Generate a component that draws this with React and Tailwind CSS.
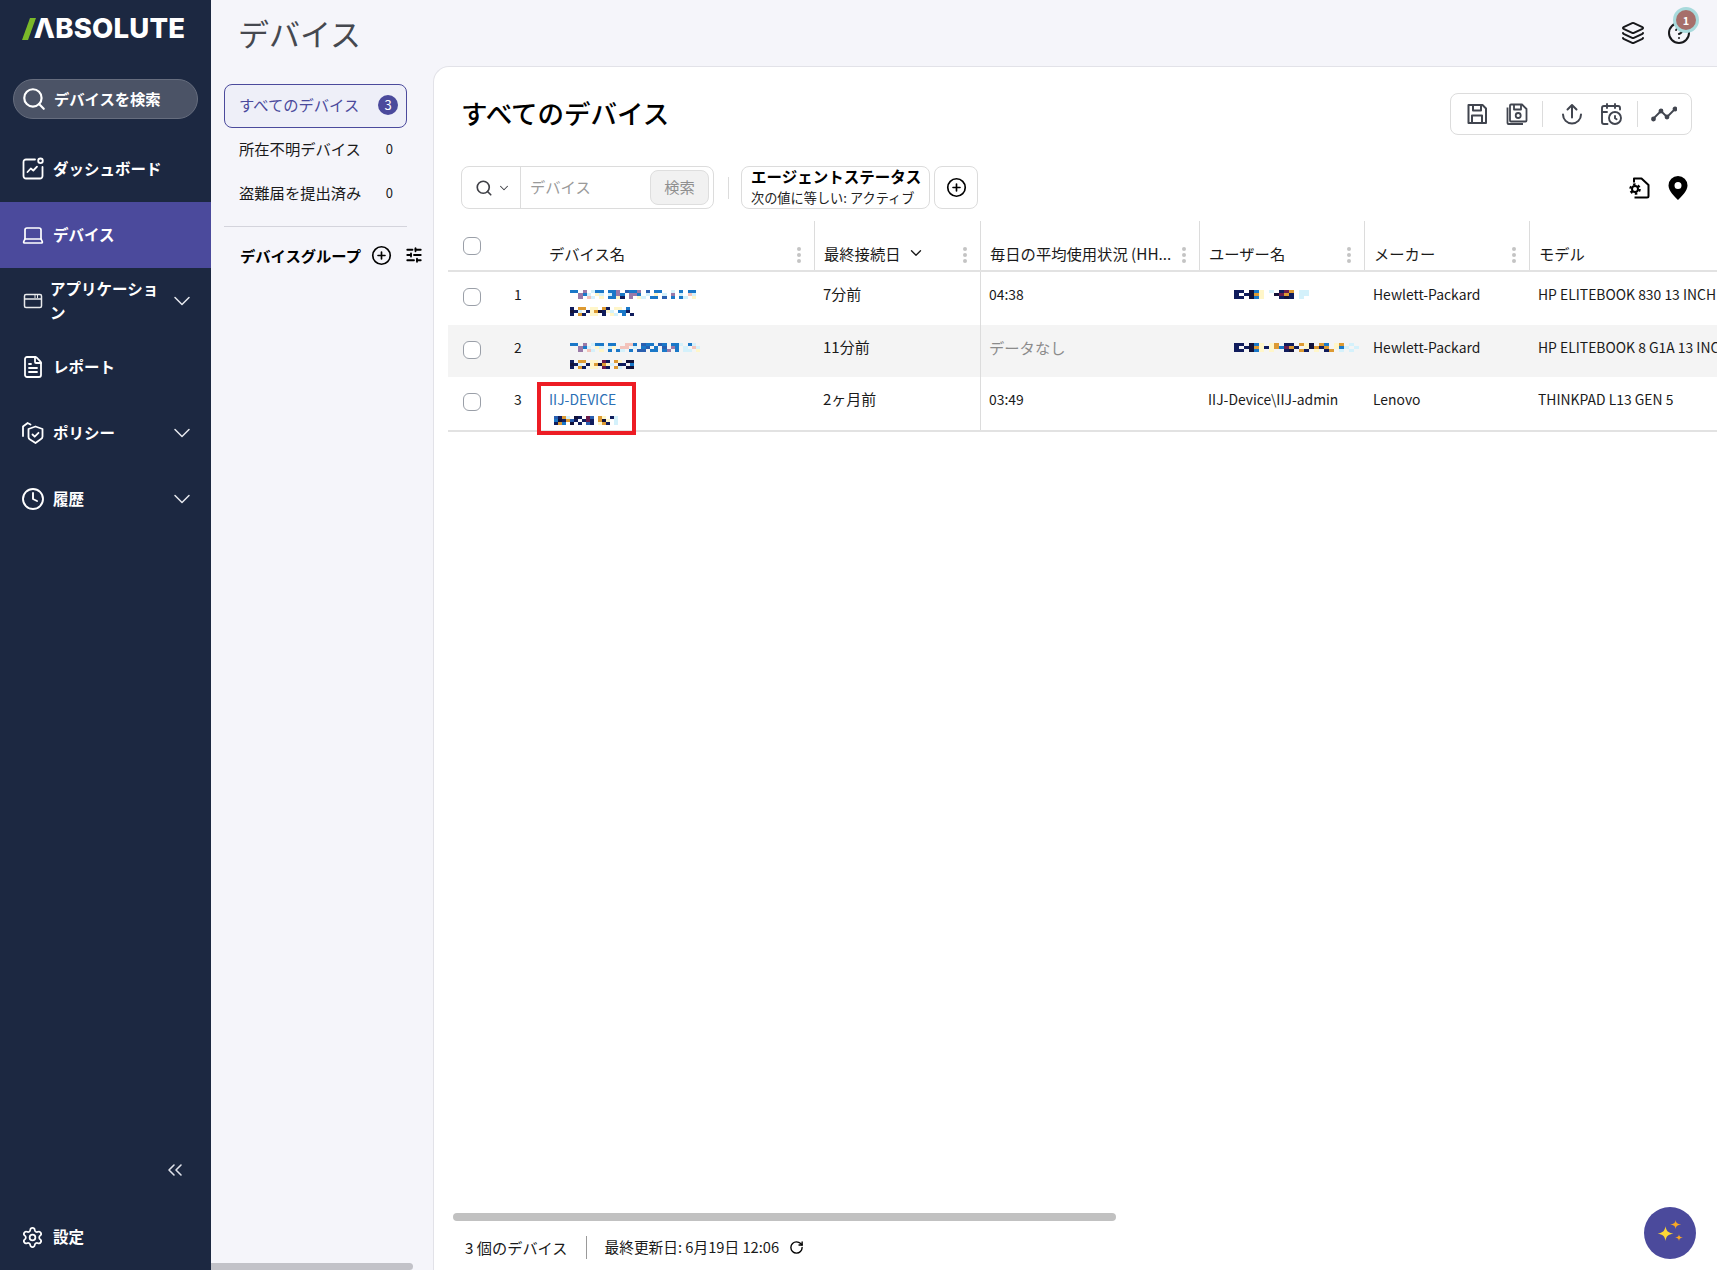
import React from 'react';
import {
  Search, ChevronDown, ChevronsLeft, Laptop, FileText, Clock, Settings, Layers, CircleHelp,
  CalendarClock, CirclePlus, SlidersHorizontal, RotateCw,
} from 'lucide-react';

const FONT = "font-['Noto_Sans_CJK_JP','Noto_Sans',sans-serif]";

const PALETTE = {
  k: '#101c5c', b: '#1a78c8', n: '#2a5fb0', l: '#d4f1fb', p: '#9a7aa8', y: '#fff6c9',
  o: '#dd9a32', r: '#f3c3bb', d: '#12123a', m: '#6b1c4c', g: '#c9c9d6',
};

// ぼかし部分 (モザイク) は文字ではなく絵として描く
const Mosaic = ({ rows, cell = 4, h = 3, className = '' }) => (
  <svg width={rows[0].length * cell} height={rows.length * h} className={`block ${className}`} shapeRendering="crispEdges">
    {rows.map((row, y) =>
      row.split('').map((c, x) =>
        PALETTE[c] ? <rect key={`${x}-${y}`} x={x * cell} y={y * h} width={cell} height={h} fill={PALETTE[c]} /> : null
      )
    )}
  </svg>
);

const NAME_1 = ['bb.p.lbb.bbp.nbbp.n.bb..l.b.bb.', '..pbl.yl.lbpb.ppb.l.y.l.p.l.rl.', '..p.rl.y.bbyk.p.yl.bb.n.b.bl.y.'];
const NAME_2 = ['bb.p.lbb.bb..rrb.nbb.nb.bbl.bl.', '..pbl.yl.ly.rr.l.bn.b.n.pb.l.rl', '..p.rl.y.b.bl.b.nn.bb.bp.b.ll.y'];
const SUB_1 = ['k.oo.yy.ok.yy.b.', 'dkl.kyodkyl.bbk.', 'k.ok.yy.k.yl.b.k'];
const SUB_2 = ['k.oo.yy.mk.oy.dd', 'dkl.kyodoyl.kk.b', 'k.ok.yy.mk.ol.dd'];
const SUB_3 = ['nkol.dk.mn.oy.kl', 'bdkonk.kmk.ody.l', 'kob.d.k.nk.yok.l'];
const USER_1 = ['kk.dby.l.kmo.ll.', 'k.kdoy..dmok.ll.', 'kk.dby...kdk.l..'];
const USER_2 = ['kk.dby.yo.kk.oyd.ob.yo.l.', 'k.kdoykyobmok.ydoko.ybl.l', 'kk.dby.y..kd.ok.y.ko.l.l.'];

const Logo = () => (
  <div className="flex items-center justify-center h-[58px] pr-[4px]" aria-label="ABSOLUTE">
    <svg width="14" height="22" viewBox="0 0 14 22" className="mr-[-2px]">
      <polygon points="8,0 14,0 6,22 0,22" fill="#7ab929" />
    </svg>
    <span className="text-white font-['Inter',sans-serif] font-extrabold text-[27.500px] leading-none tracking-[0.2px]">ΛBSOLUTE</span>
  </div>
);

const DashIcon = () => (
  <svg width="24" height="24" viewBox="0 0 24 24" fill="none" stroke="currentColor" strokeWidth="1.800" strokeLinecap="round" strokeLinejoin="round">
    <path d="M14 2.500H5a2.500 2.500 0 0 0-2.500 2.500v14A2.500 2.500 0 0 0 5 21.500h14a2.500 2.500 0 0 0 2.500-2.500V10" />
    <circle cx="19.500" cy="3.800" r="2.300" />
    <path d="M6.500 15l3.300-3.500 2.500 2 3.700-3.800" />
  </svg>
);

const AppIcon = () => (
  <svg width="20" height="20" viewBox="0 0 20 20" fill="none" stroke="currentColor" strokeWidth="1.500" strokeLinejoin="round" className="opacity-90">
    <rect x="1.500" y="3.500" width="17" height="13" rx="1.500" />
    <path d="M1.500 8h17" />
    <path d="M12 4v3M14.500 4v3" strokeWidth="1" />
  </svg>
);

const PolicyIcon = () => (
  <svg width="24" height="24" viewBox="0 0 24 24" fill="none" stroke="currentColor" strokeWidth="1.800" strokeLinecap="round" strokeLinejoin="round">
    <path d="M14.500 5.500l7 2.500v7.500c0 1-.5 2-1.500 2.600L14.500 22 9 18.600c-1-.6-1.500-1.600-1.500-2.600V8z" />
    <path d="M11.500 13.500l2.200 2.200 3.800-3.900" />
    <path d="M2 15V5.500L6 2.500M6.500 2l3 1.500" />
  </svg>
);

const NavItem = ({ icon, label, chevron, active, labelClass = 'ml-[8px] pr-[16px]' }) => (
  <div className={`flex items-center h-[66px] pl-[21px] pr-[15px] text-white ${active ? 'bg-[#4b4a9c]' : ''}`}>
    <span className="w-[24px] flex justify-center shrink-0">{icon}</span>
    <span className={`flex-1 mb-[2px] text-[15.500px] font-semibold leading-[24px] ${labelClass}`}>{label}</span>
    {chevron && <ChevronDown className="w-[28px] h-[28px] shrink-0 text-[#e4e6ec]" strokeWidth={1.300} />}
  </div>
);

const Sidebar = () => (
  <aside className="w-[211px] shrink-0 h-full bg-[#1c2841] flex flex-col">
    <Logo />
    <div className="mx-[13px] mt-[21px] h-[40px] rounded-full bg-[#4b5366] border border-[#666d7e] flex items-center pl-[7px] text-white">
      <Search className="w-[26px] h-[26px]" strokeWidth={2} />
      <span className="ml-[7px] mb-[2px] text-[15.300px] font-semibold">デバイスを検索</span>
    </div>
    <nav className="mt-[17px] flex flex-col">
      <NavItem icon={<DashIcon />} label="ダッシュボード" />
      <NavItem active icon={<Laptop className="w-[24px] h-[24px]" strokeWidth={1.700} />} label="デバイス" />
      <NavItem icon={<AppIcon />} label="アプリケーション" chevron labelClass="ml-[5px] pr-[4px]" />
      <NavItem icon={<FileText className="w-[24px] h-[24px]" strokeWidth={1.800} />} label="レポート" />
      <NavItem icon={<PolicyIcon />} label="ポリシー" chevron />
      <NavItem icon={<Clock className="w-[24px] h-[24px]" strokeWidth={1.900} />} label="履歴" chevron />
    </nav>
    <div className="mt-auto flex justify-end pr-[24px] text-[#dfe2ea]">
      <ChevronsLeft className="w-[24px] h-[24px]" strokeWidth={1.600} />
    </div>
    <div className="flex items-center h-[34px] mt-[38px] mb-[16px] pl-[21px] text-white">
      <Settings className="w-[23px] h-[23px]" strokeWidth={1.800} />
      <span className="ml-[9px] text-[15.500px] font-semibold">設定</span>
    </div>
  </aside>
);

const TopBar = () => (
  <header className="h-[66px] shrink-0 flex items-center justify-between pl-[27px] pr-[26px]">
    <h1 className="text-[31px] leading-[48px] font-normal text-[#45484f]">デバイス</h1>
    <div className="flex items-center gap-[22px] text-[#17181b]">
      <Layers className="w-[24px] h-[24px]" strokeWidth={2} />
      <div className="relative">
        <CircleHelp className="w-[24px] h-[24px]" strokeWidth={2} />
        <span className="absolute -top-[11px] -right-[5px] w-[20px] h-[20px] rounded-full bg-[#a66f6b] ring-[3px] ring-[#a8dadc] text-white text-[11px] font-bold flex items-center justify-center">1</span>
      </div>
    </div>
  </header>
);

const SubPanel = () => (
  <div className="w-[222px] shrink-0 h-full relative pl-[13px] pr-[26px] pt-[18px]">
    <div className="h-[44px] rounded-lg border border-[#4b4a9c] bg-[#eeeff8] flex items-center justify-between pl-[14px] pr-[8px] pb-[3px] text-[#4b4a9c]">
      <span className="text-[15.300px]">すべてのデバイス</span>
      <span className="w-[20px] h-[20px] rounded-full bg-[#4b4a9c] text-white text-[13px] flex items-center justify-center">3</span>
    </div>
    <div className="h-[44px] pb-[3px] flex items-center justify-between pl-[15px] pr-[14px] text-[15.300px] text-[#1a1a1a]">
      <span>所在不明デバイス</span><span className="text-[13px]">0</span>
    </div>
    <div className="h-[44px] pb-[3px] flex items-center justify-between pl-[15px] pr-[14px] text-[15.300px] text-[#1a1a1a]">
      <span>盗難届を提出済み</span><span className="text-[13px]">0</span>
    </div>
    <div className="mt-[10px] border-t border-[#d4d4dc]" />
    <div className="mt-[17px] flex items-center pl-[16px] text-black -mr-[14px]">
      <span className="text-[15.300px] font-semibold whitespace-nowrap">デバイスグループ</span>
      <CirclePlus className="ml-[10px] w-[21px] h-[21px] shrink-0" strokeWidth={1.900} />
      <SlidersHorizontal className="ml-[13px] w-[18px] h-[18px] shrink-0" strokeWidth={2.400} />
    </div>
    <div className="absolute left-0 bottom-0 w-[202px] h-[7px] rounded-r-sm bg-[#c2c2c8]" />
  </div>
);

const UploadIcon = () => (
  <svg width="24" height="24" viewBox="0 0 24 24" fill="none" stroke="#41454f" strokeWidth="2" strokeLinecap="round" strokeLinejoin="round">
    <path d="M12 15.500V3M7.500 7.500L12 3l4.500 4.500" />
    <path d="M3 12.500a9 9 0 0 0 18 0" />
  </svg>
);

const SaveStackIcon = () => (
  <svg width="24" height="24" viewBox="0 0 24 24" fill="none" stroke="#41454f" strokeWidth="1.800" strokeLinejoin="round">
    <path d="M6 2.500h11l4.500 4.500v11.500a1 1 0 0 1-1 1H6a1 1 0 0 1-1-1v-15a1 1 0 0 1 1-1z" />
    <path d="M2.500 5.500V21a1 1 0 0 0 1 1H18" />
    <path d="M9 3v4.500h7V3" />
    <circle cx="13.200" cy="13.500" r="2.500" />
  </svg>
);

const SaveIcon = () => (
  <svg width="24" height="24" viewBox="0 0 24 24" fill="none" stroke="#41454f" strokeWidth="2" strokeLinejoin="round">
    <path d="M3.500 3h14l3.500 3.500v14.500h-17.500z" />
    <path d="M8 3v5.500h8V3" />
    <path d="M7 21v-7.500h10V21" />
  </svg>
);

const TrendIcon = () => (
  <svg width="26" height="24" viewBox="0 0 26 24" fill="none" stroke="#41454f" strokeWidth="1.800" strokeLinecap="round" strokeLinejoin="round">
    <path d="M2 17l8-8 6 6 8-8" />
    <circle cx="2.500" cy="17" r="1.500" fill="#41454f" />
    <circle cx="10" cy="9" r="1.500" fill="#41454f" />
    <circle cx="16" cy="15" r="1.500" fill="#41454f" />
    <circle cx="24" cy="7" r="1.500" fill="#41454f" />
  </svg>
);

const GearDocIcon = () => (
  <svg width="24" height="24" viewBox="0 0 24 24" fill="none" stroke="#000" strokeWidth="2" strokeLinejoin="round">
    <path d="M7 6.500V2.500h7.500l7 6.500v11a1.500 1.500 0 0 1-1.500 1.500H7.500" />
    <circle cx="8" cy="13" r="4.700" strokeWidth="2.200" strokeDasharray="2.460 2.460" />
    <circle cx="8" cy="13" r="3" strokeWidth="2" />
  </svg>
);

const PinIcon = () => (
  <svg width="20" height="24" viewBox="0 0 20 24">
    <path fillRule="evenodd" d="M10 0a9.500 9.500 0 0 1 9.500 9.500C19.500 15 13 21 10 24 7 21 .5 15 .5 9.500A9.500 9.500 0 0 1 10 0zm0 6a3.500 3.500 0 1 0 0 7 3.500 3.500 0 0 0 0-7z" fill="#000" />
  </svg>
);

const CardHeader = () => (
  <div className="flex items-start justify-between pl-[27px] pr-[25px] pt-[26px]">
    <h2 className="text-[26.500px] leading-[40px] font-medium text-black">すべてのデバイス</h2>
    <div className="h-[42px] w-[242px] rounded-lg border border-[#dcdcdc] flex items-center pl-[14px] text-[#41454f]">
      <SaveIcon />
      <span className="ml-[16px]"><SaveStackIcon /></span>
      <span className="ml-[13px] w-px h-[26px] bg-[#dcdcdc]" />
      <span className="ml-[17px]"><UploadIcon /></span>
      <CalendarClock className="ml-[15px] w-[24px] h-[24px]" strokeWidth={1.900} />
      <span className="ml-[14px] w-px h-[26px] bg-[#dcdcdc]" />
      <span className="ml-[13px]"><TrendIcon /></span>
    </div>
  </div>
);

const Toolbar = () => (
  <div className="mt-[31px] flex items-center pl-[27px] pr-[29px]">
    <div className="h-[43px] w-[253px] rounded-lg border border-[#dcdcdc] flex items-center">
      <div className="w-[59px] h-full border-r border-[#dcdcdc] flex items-center pl-[13px] gap-[4px] text-[#3f4046]">
        <Search className="w-[18px] h-[18px]" strokeWidth={2.200} />
        <ChevronDown className="w-[14px] h-[14px]" strokeWidth={1.800} />
      </div>
      <span className="ml-[9px] mb-[2px] flex-1 text-[15.300px] text-[#9a9a9a]">デバイス</span>
      <span className="w-[59px] h-[35px] mr-[4px] pb-[2px] rounded-lg bg-[#f1f1f1] border border-[#dedede] text-[#8f8f8f] text-[15.300px] flex items-center justify-center">検索</span>
    </div>
    <span className="ml-[14px] w-px h-[22px] bg-[#dcdcdc]" />
    <div className="ml-[12px] h-[43px] w-[189px] rounded-lg border border-[#dcdcdc] pl-[9px] flex flex-col justify-center">
      <div className="text-[15.500px] leading-[20px] font-semibold text-black whitespace-nowrap -mt-[2px]">エージェントステータス</div>
      <div className="text-[13.200px] leading-[19px] mt-[2px] text-[#222] whitespace-nowrap">次の値に等しい: アクティブ</div>
    </div>
    <div className="ml-[4px] w-[44px] h-[43px] rounded-lg border border-[#dcdcdc] flex items-center justify-center">
      <CirclePlus className="w-[21px] h-[21px] text-black" strokeWidth={1.900} />
    </div>
    <div className="ml-auto flex items-center gap-[17px] mt-[1px]">
      <GearDocIcon />
      <PinIcon />
    </div>
  </div>
);

// 列幅: チェック / No / デバイス名 / 最終接続日 / 平均使用 / ユーザー名 / メーカー / モデル
const COLS = 'grid grid-cols-[56px_36px_274px_166px_219px_165px_165px_260px]';

const Dots = () => (
  <span className="flex flex-col gap-[2px] absolute right-[13px] top-[26px]">
    <i className="block w-[4px] h-[4px] rounded-full bg-[#c4c4c4]" />
    <i className="block w-[4px] h-[4px] rounded-full bg-[#c4c4c4]" />
    <i className="block w-[4px] h-[4px] rounded-full bg-[#c4c4c4]" />
  </span>
);

const Th = ({ children, first, noDots }) => (
  <div className={`relative h-full pt-[21px] pl-[9px] text-[15.300px] text-[#1a1a1a] whitespace-nowrap overflow-hidden ${first ? '' : 'border-l border-[#dcdcdc]'}`}>
    {children}
    {!noDots && <Dots />}
  </div>
);

const Check = ({ className = '' }) => (
  <span className={`block w-[18px] h-[18px] rounded-[6px] border border-[#9a9fa8] bg-white ${className}`} />
);

const Row = ({ n, name, sub, last, usage, user, maker, model, shaded, boxed }) => (
  <div className={`${COLS} h-[52.500px] text-[13.900px] text-[#1a1a1a] ${shaded ? 'bg-[#f4f4f4]' : ''}`}>
    <div className="pl-[15px] pt-[16px]"><Check /></div>
    <div className="pl-[10px] pt-[12px] leading-[20px]">{n}</div>
    <div className="relative pl-[9px] pt-[12px] leading-[20px]">
      {name}
      <div className="mt-[7px]">{sub}</div>
      {boxed && <div className="absolute left-[-3px] top-[5px] w-[99px] h-[53px] border-[4px] border-[#ed1c24]" />}
    </div>
    <div className="pl-[9px] pt-[12px] leading-[20px] text-[15px]">{last}</div>
    <div className="pl-[8px] pt-[12px] leading-[20px] border-l border-[#dcdcdc]">{usage}</div>
    <div className="pl-[9px] pt-[12px] leading-[20px] whitespace-nowrap">{user}</div>
    <div className="pl-[9px] pt-[12px] leading-[20px]">{maker}</div>
    <div className="pl-[9px] pt-[12px] leading-[20px] whitespace-nowrap">{model}</div>
  </div>
);

const DeviceTable = () => (
  <div className="mt-[12px] ml-[14px] pb-[10px] overflow-hidden">
    <div className={`${COLS} h-[51px] border-b-2 border-[#e2e2e2]`}>
      <div className="pl-[15px] pt-[16px]"><Check /></div>
      <div />
      <Th first>デバイス名</Th>
      <Th><span className="inline-flex items-center gap-[6px]">最終接続日<ChevronDown className="w-[18px] h-[18px]" strokeWidth={1.800} /></span></Th>
      <Th>毎日の平均使用状況 (HH...</Th>
      <Th>ユーザー名</Th>
      <Th>メーカー</Th>
      <Th noDots>モデル</Th>
    </div>
    <Row
      n="1"
      name={<Mosaic rows={NAME_1} cell={4.200} className="ml-[21px] mt-[6px]" />}
      sub={<Mosaic rows={SUB_1} className="ml-[21px] mt-[8px]" />}
      last="7分前"
      usage="04:38"
      user={<Mosaic rows={USER_1} cell={5} className="ml-[26px] mt-[6px]" />}
      maker="Hewlett-Packard"
      model="HP ELITEBOOK 830 13 INCH"
    />
    <Row
      n="2"
      shaded
      name={<Mosaic rows={NAME_2} cell={4.200} className="ml-[21px] mt-[6px]" />}
      sub={<Mosaic rows={SUB_2} className="ml-[21px] mt-[8px]" />}
      last="11分前"
      usage={<span className="text-[15.300px] text-[#8b8b8b]">データなし</span>}
      user={<Mosaic rows={USER_2} cell={5} className="ml-[26px] mt-[6px]" />}
      maker="Hewlett-Packard"
      model="HP ELITEBOOK 8 G1A 13 INCH"
    />
    <Row
      n="3"
      boxed
      name={<span className="text-[#2a6fb5]">IIJ-DEVICE</span>}
      sub={<Mosaic rows={SUB_3} className="ml-[5px] mt-[1px]" />}
      last="2ヶ月前"
      usage="03:49"
      user="IIJ-Device\IIJ-admin"
      maker="Lenovo"
      model="THINKPAD L13 GEN 5"
    />
    <div className="border-t-2 border-[#e2e2e2]" />
  </div>
);

const Footer = () => (
  <div className="mt-auto">
    <div className="ml-[19px] w-[663px] h-[8px] rounded-full bg-[#c1c1c1]" />
    <div className="h-[49px] pt-[3px] flex items-center pl-[31px] text-[15.200px] text-[#1a1a1a]">
      <span>3 個のデバイス</span>
      <span className="mx-[18px] w-px h-[23px] bg-[#9a9a9a]" />
      <span className="text-[14.700px]">最終更新日: 6月19日 12:06</span>
      <RotateCw className="ml-[10px] w-[15px] h-[15px] text-black" strokeWidth={2.200} />
    </div>
  </div>
);

const Fab = () => (
  <div className="absolute right-[21px] bottom-[11px] w-[52px] h-[52px] rounded-full bg-[#4b4a9c] flex items-center justify-center">
    <svg width="36" height="36" viewBox="0 0 32 32">
      <path d="M12 10c.8 4.500 2.200 5.500 7 6.500-4.800 1-6.200 2-7 6.500-.8-4.500-2.200-5.500-7-6.500 4.800-1 6.200-2 7-6.500z" fill="#fdd835" />
      <path d="M21 4.500c.4 2.700 1.300 3.400 5 4-3.700.6-4.600 1.300-5 4-.4-2.700-1.300-3.400-5-4 3.700-.6 4.600-1.300 5-4z" fill="#f9a825" />
      <path d="M24 17c.3 2 .9 2.500 3.500 3-2.600.5-3.200 1-3.500 3-.3-2-.9-2.500-3.500-3 2.600-.5 3.200-1 3.500-3z" fill="#f9a825" />
    </svg>
  </div>
);

export default function App() {
  return (
    <div className={`${FONT} w-full h-[1270px] flex overflow-hidden bg-[#f5f5fa]`}>
      <Sidebar />
      <div className="flex-1 min-w-0 flex flex-col">
        <TopBar />
        <div className="flex-1 min-h-0 flex">
          <SubPanel />
          <main className="relative flex-1 min-w-0 flex flex-col bg-white border-l border-t border-[#e2e2e8] rounded-tl-2xl">
            <CardHeader />
            <Toolbar />
            <DeviceTable />
            <Footer />
            <Fab />
          </main>
        </div>
      </div>
    </div>
  );
}
